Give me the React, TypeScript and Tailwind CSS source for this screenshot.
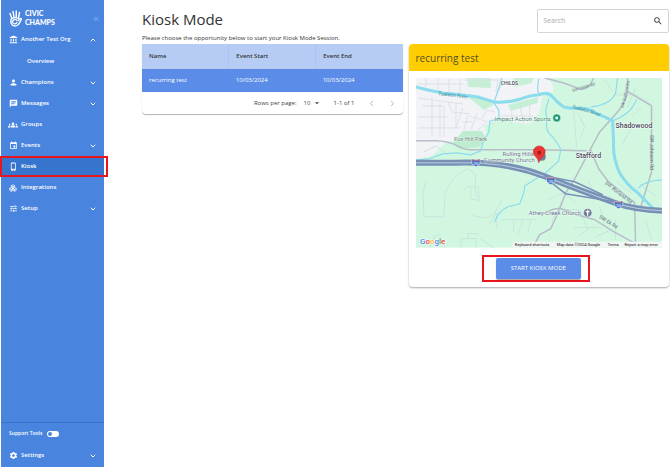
import { useState } from 'react'
import type { ReactNode } from 'react'
import {
  MdAccountBalance,
  MdPerson,
  MdChat,
  MdGroups,
  MdEvent,
  MdPhoneIphone,
  MdTune,
  MdSettings,
  MdSearch,
  MdArrowDropDown,
} from 'react-icons/md'
import { ChevronDown, ChevronUp, ChevronLeft, ChevronRight, ChevronsLeft, Boxes } from 'lucide-react'

interface NavItem {
  label: string
  icon: ReactNode
  chevron?: 'up' | 'down'
}

const navItems: NavItem[] = [
  { label: 'Champions', icon: <MdPerson size={9} />, chevron: 'down' },
  { label: 'Messages', icon: <MdChat size={9} />, chevron: 'down' },
  { label: 'Groups', icon: <MdGroups size={10} /> },
  { label: 'Events', icon: <MdEvent size={9} />, chevron: 'down' },
  { label: 'Kiosk', icon: <MdPhoneIphone size={9} /> },
  { label: 'Integrations', icon: <Boxes size={8} /> },
  { label: 'Setup', icon: <MdTune size={9} />, chevron: 'down' },
]

function NavLink({ item, active }: { item: NavItem; active?: boolean }) {
  return (
    <a
      href="#"
      className={`relative flex h-[21px] items-center pl-1.5 pr-[7px] ${active ? 'bg-[#3674cd]' : ''}`}
    >
      <span className="flex w-3 justify-center">{item.icon}</span>
      <span className="ml-0.5 flex-1">{item.label}</span>
      {item.chevron === 'up' && <ChevronUp size={8} strokeWidth={3} />}
      {item.chevron === 'down' && <ChevronDown size={8} strokeWidth={3} />}
      {active && <span className="absolute -left-px -right-1 inset-y-0 border-2 border-[#e8151c]" />}
    </a>
  )
}

function Logo() {
  return (
    <div className="flex items-center gap-[3px]">
      <svg width="13" height="17" viewBox="0 0 26 34" fill="none" stroke="#fff" strokeLinecap="round">
        <path d="M5.500 16 2 7M10 14 8 3M14.500 14 14.500 2M19 16 21 5" strokeWidth="2.800" />
        <path d="M5 17C2 25 5 32 12 32c6 0 8-4 10-8l3-6c-2-2-5 0-6 3" strokeWidth="2.800" />
        <path d="M16 21c-3-4-9-2-9 3 1 5 7 5 9 1" strokeWidth="2.500" />
        <path d="M6 17c4-2 9-2 13 0" strokeWidth="2.500" />
      </svg>
      <div className="font-['Lato',sans-serif] text-[7px] leading-[9px] font-black text-white">
        <div>CIVIC</div>
        <div>CHAMPS</div>
      </div>
    </div>
  )
}

function Sidebar() {
  const [support, setSupport] = useState(false)
  return (
    <aside className="ml-px flex min-h-screen w-[103px] shrink-0 flex-col bg-[#4985df] text-[6px] font-semibold text-white">
      <div className="flex h-[29px] items-end justify-between pl-2 pr-1 pb-0.5">
        <Logo />
        <button type="button" aria-label="Collapse menu" className="pb-1 text-[#a9c7f5]">
          <ChevronsLeft size={8} />
        </button>
      </div>
      <nav>
        <NavLink item={{ label: 'Another Test Org', icon: <MdAccountBalance size={9} />, chevron: 'up' }} />
        <a href="#" className="flex h-[22px] items-center pl-[26px]">
          Overview
        </a>
        {navItems.map((item) => (
          <NavLink key={item.label} item={item} active={item.label === 'Kiosk'} />
        ))}
      </nav>
      <div className="mt-auto border-t border-[#3674cd] pb-px">
        <label className="flex h-[22px] items-center gap-[5px] pl-2 text-[5px]">
          Support Tools
          <input
            type="checkbox"
            role="switch"
            checked={support}
            onChange={() => setSupport(!support)}
            className="peer sr-only"
          />
          <span className="flex h-[6px] w-3 items-center justify-start rounded-full bg-white px-px peer-checked:justify-end">
            <span className="size-1 rounded-full bg-[#4985df]" />
          </span>
        </label>
        <NavLink item={{ label: 'Settings', icon: <MdSettings size={9} />, chevron: 'down' }} />
      </div>
    </aside>
  )
}

function OpportunityTable() {
  return (
    <section className="self-start rounded-sm bg-white shadow-[0_1px_1px_rgba(0,0,0,0.3)]">
      <table className="w-full table-fixed text-left text-[6px]">
        <thead className="bg-[#b7ccf5]">
          <tr className="h-[25px]">
            <th className="border-r border-[#adc4f0] pl-[7px] font-semibold">Name</th>
            <th className="border-r border-[#adc4f0] pl-[7px] font-semibold">Event Start</th>
            <th className="pl-[7px] font-semibold">Event End</th>
          </tr>
        </thead>
        <tbody>
          <tr className="h-[23px] bg-[#5b8de8] text-white">
            <td className="pl-[7px]">recurring test</td>
            <td className="pl-[7px]">10/03/2024</td>
            <td className="pl-[7px]">10/03/2024</td>
          </tr>
        </tbody>
      </table>
      <div className="flex h-[22px] items-center justify-end pr-1.5 text-[6px] text-[#444]">
        <label htmlFor="rows">Rows per page:</label>
        <span className="ml-[7px] flex items-center">
          <select id="rows" className="w-2 appearance-none">
            <option>10</option>
          </select>
          <MdArrowDropDown size={10} />
        </span>
        <span className="ml-3">1-1 of 1</span>
        <button type="button" aria-label="Previous page" className="ml-3 text-[#999]">
          <ChevronLeft size={9} />
        </button>
        <button type="button" aria-label="Next page" className="ml-3 text-[#999]">
          <ChevronRight size={9} />
        </button>
      </div>
    </section>
  )
}

function Shield({ x, y }: { x: number; y: number }) {
  return (
    <g transform={`translate(${x} ${y})`}>
      <path d="M-4-3.500Q0-2 4-3.500 5.500 2 0 4-5.500 2-4-3.500Z" fill="#4377c8" stroke="#fff" strokeWidth=".5" />
      <path d="M-4-3.500Q0-2 4-3.500L4.300-2.200H-4.300Z" fill="#d65b60" />
      <text y="1.800" textAnchor="middle" fontSize="3" fill="#fff">205</text>
    </g>
  )
}

function AreaMap() {
  return (
    <svg
      viewBox="416 78 247 170"
      preserveAspectRatio="xMidYMid slice"
      className="block w-full font-['Roboto',sans-serif]"
      fill="none"
    >
      <rect x="416" y="78" width="247" height="170" fill="#d2f7e1" />
      {/* built-up area */}
      <path
        d="M416 78H546Q556 84 553 92L543 94 540 112 530 124 496 120 484 126 487 138 478 146 448 141 432 156 416 160Z"
        fill="#f2f3f6"
      />
      <path d="M467 78H491V88L468 87ZM467 96 488 100 494 105 484 110ZM508 105 538 97V103L511 111ZM514 78H534L532 83 514 87Z" fill="#c5f0d5" />
      <path d="M463 131 482 131 487 140 479 147 460 150 452 144Z" fill="#bdecd0" />
      {/* side streets */}
      <g stroke="#dde0e7" strokeWidth="1">
        <path d="M418 84h46M426 78v9M438 78v12M449 79v13M460 79v16M418 98l45 6M422 106h22v31M432 97v39M440 103v35M418 117h30M418 128h42M448 102l4 10 18 2M456 104v24M463 108l-7 20M468 116l-4 14M470 116l24 8M477 113l-6 17M482 119l5-9 8 2M487 122l-10 9M462 122h10M464 80h36M498 80l-2 12M502 84l-6 12M500 116h33M512 108v15M520 106l4 17M530 104v18" />
      </g>
      <g stroke="#c9e4db" strokeWidth="1">
        <path d="M424 152l12-6 12 9M426 181l-3 12 1 24h20l1-22c4-12 10-20 23-26l8 6-1 12 2 11M464 190l4-3h11v14l-8-2v-11M472 216l14 2 8-3 8-15M497 229v-16l-8 12M501 220h35M514 220v12M523 220l-5 15M531 221l-3 12M461 248v-9h15v9M468 239v-5h11M480 239l14 9M430 248l4-11 6-2 5 13" />
        <path d="M574 111l3 36M578 113l7 14-4 11M615 95h22l15 10M636 88l-8 20M635 122l-12 22M641 108l-8 8M605 80l9 12M564 198l-12 24M548 200l16-7 12 10M561 210h19l8 20M588 180l6 13 19 5M617 182l16 12M574 228h28M600 207l5 18M579 236l15-10M640 184l16 12M646 220l6 20M616 220v20M594 238l18-8" />
      </g>
      {/* main roads */}
      <g stroke="#b7bdc9" strokeWidth="1.500">
        <path d="M416 141h19q13 0 25 6 5 3 12 3h67l48 1" />
        <path d="M628 78v14q-3 12-10 20L600 132 583 164 575 179 566 193 558 214 551 229 540 235 533 248" />
        <path d="M591 150l8 19 9 12 17 14 10 8 1 40M627 91l25 15v66l-11 36M545 78l19 5 16 6q9 2 14-11" />
        <path d="M544 214q10-6 17-5t13 5l21 6 19 12 22 12" />
      </g>
      {/* rivers */}
      <g stroke="#8bdcec" strokeLinecap="round">
        <path d="M416 87l12 3 15 3 20 2 15 2 16 5q14 1 27-3 10-4 18-4 9-4 14 2 5 6 11 10 8 2 17 1 9 0 16 6 9 3 16 7l1 21q-1 16 6 31 7 12 17 19l17 17" strokeWidth="3" />
        <path d="M502 78l-4 13-4 12 5 7v9l-9 2-1 11-6 11-2 8-10 4-14-2-14 1-14 5-13 1M539 79q-2 10 0 15M549 99l-3 11 1 11q-1 8 2 12 9 9 12 17l-2 11-13 12-21 13-1 7-4 11-12 3q-10 5-13 15M592 107q20-3 24-14l2-15M613 121q15-6 20-14l4-7M639 188q6-7 23-8" strokeWidth="1.200" />
      </g>
      {/* interstate */}
      <path d="M416 163h39q51-2 91 14 38 15 69 26 20 7 48 8" stroke="#7890b6" strokeWidth="6" />
      <path d="M416 163h39q51-2 91 14 38 15 69 26 20 7 48 8" stroke="#b9cfdc" strokeWidth="1" />
      <path d="M548 180l18 14 49 8M544 176l31 6 28 13" stroke="#7890b6" strokeWidth="1.500" />
      <Shield x={476} y={163} />
      <Shield x={551} y={181} />
      <Shield x={619} y={205} />
      {/* water and road names */}
      <g fontSize="5" fill="#39879b">
        <text transform="translate(438 95) rotate(7)">Tualatin River</text>
        <text transform="translate(572 108) rotate(16)">Tualatin River</text>
      </g>
      <g fontSize="5" fill="#667080">
        <text transform="translate(573 92) rotate(-17)" fontSize="4">SW Childs Rd</text>
        <text transform="translate(624 108) rotate(-77)" fontSize="4">SW Stafford Rd</text>
        <text transform="translate(650 135) rotate(90)">SW Johnson Rd</text>
        <text transform="translate(605 184) rotate(38)">SW Borland Rd</text>
        <text transform="translate(599 218) rotate(32)">SW Ek Rd</text>
      </g>
      {/* places */}
      <g fontSize="7" fill="#3d4756" stroke="#fff" strokeWidth="1" paintOrder="stroke" fontWeight="500">
        <text x="501" y="85" fontSize="5">CHILDS</text>
        <text x="616" y="128">Shadowood</text>
        <text x="576" y="158">Stafford</text>
      </g>
      <g fontSize="6" fill="#64728a" stroke="#fff" strokeWidth=".5" paintOrder="stroke">
        <text x="495" y="121" fill="#40866f">Impact Action Sports</text>
        <text x="454" y="141" fill="#5e8276">Fox Hill Park</text>
        <text x="534" y="156" textAnchor="end">Rolling Hills</text>
        <text x="535" y="162" textAnchor="end">Community Church</text>
        <text x="529" y="215">Athey Creek Church</text>
      </g>
      <circle cx="557" cy="118" r="4" fill="#159a72" stroke="#fff" strokeWidth=".5" />
      <circle cx="557" cy="118" r="1.500" fill="#fff" />
      <circle cx="588" cy="213" r="4.300" fill="#718096" stroke="#fff" strokeWidth=".5" />
      <path d="M588 210v6M586 212h4" stroke="#fff" strokeWidth="1.200" />
      <circle cx="542" cy="157" r="4" fill="#718096" />
      <path d="M539 163q-.5-4-3.500-6.500a6 6 0 1 1 8 0Q540 159 539 163Z" fill="#ea3535" stroke="#c32626" strokeWidth=".5" />
      <circle cx="539.500" cy="153" r="2" fill="#a51b1b" />
      {/* attribution bar */}
      <rect x="513" y="242" width="150" height="6" fill="#f1f5f3" />
      <g fontSize="4" fill="#111">
        <text x="515" y="246">Keyboard shortcuts</text>
        <text x="557" y="246">Map data ©2024 Google</text>
        <text x="608" y="246">Terms</text>
        <text x="625" y="246">Report a map error</text>
      </g>
      <text x="420" y="244" fontSize="8" fontWeight="500" stroke="#fff" strokeWidth="1" paintOrder="stroke">
        <tspan fill="#4285f4">G</tspan>
        <tspan fill="#ea4335">o</tspan>
        <tspan fill="#fbbc05">o</tspan>
        <tspan fill="#4285f4">g</tspan>
        <tspan fill="#34a853">l</tspan>
        <tspan fill="#ea4335">e</tspan>
      </text>
    </svg>
  )
}

function KioskCard() {
  return (
    <section className="rounded-sm bg-white shadow-[0_1px_2px_rgba(0,0,0,0.35)]">
      <h2 className="flex h-[27px] items-center rounded-t-sm bg-[#ffcd00] pt-0.5 pl-[7px] text-[10px] text-[#574d27]">
        recurring test
      </h2>
      <div className="px-[7px] pt-[7px]">
        <AreaMap />
      </div>
      <div className="flex justify-center pt-[7px] pb-[5px]">
        <div className="mr-1.5 flex border-2 border-[#e8151c] pt-px pr-[7px] pb-px pl-3">
          <button
            type="button"
            className="h-[21px] w-[85px] rounded-xs bg-[#5b8de8] text-[6px] text-white shadow-[0_1px_1px_rgba(0,0,0,0.35)]"
          >
            START KIOSK MODE
          </button>
        </div>
      </div>
    </section>
  )
}

export default function App() {
  return (
    <div className="flex min-h-screen bg-white font-['Open_Sans',sans-serif] text-[#333]">
      <Sidebar />
      <main className="min-w-0 flex-1 pt-[9px] pr-px pl-[38px]">
        <header className="flex h-[35px] items-start justify-between">
          <div>
            <h1 className="text-[15px] leading-5">Kiosk Mode</h1>
            <p className="mt-1 text-[6px] leading-[10px]">
              Please choose the opportunity below to start your Kiosk Mode Session.
            </p>
          </div>
          <div className="flex h-6 w-1/4 items-center rounded-xs border border-[#d5d5d5] px-[5px]">
            <input
              type="search"
              aria-label="Search"
              placeholder="Search"
              className="min-w-0 flex-1 text-[7px] outline-none placeholder:text-[#aaa]"
            />
            <MdSearch size={10} />
          </div>
        </header>
        <div className="grid grid-cols-2 gap-1.5">
          <OpportunityTable />
          <KioskCard />
        </div>
      </main>
    </div>
  )
}
